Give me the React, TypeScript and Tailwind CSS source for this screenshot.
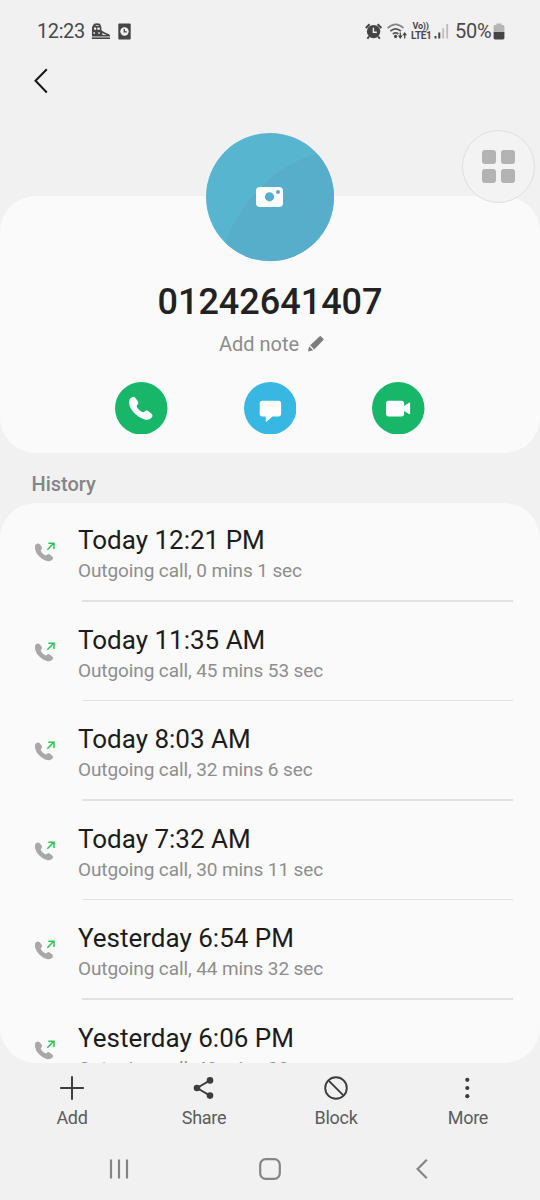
import React from "react";

const calls = [
  { when: "Today 12:21 PM", detail: "Outgoing call, 0 mins 1 sec" },
  { when: "Today 11:35 AM", detail: "Outgoing call, 45 mins 53 sec" },
  { when: "Today 8:03 AM", detail: "Outgoing call, 32 mins 6 sec" },
  { when: "Today 7:32 AM", detail: "Outgoing call, 30 mins 11 sec" },
  { when: "Yesterday 6:54 PM", detail: "Outgoing call, 44 mins 32 sec" },
  { when: "Yesterday 6:06 PM", detail: "Outgoing call, 48 mins 33 sec" },
];

const HANDSET =
  "M97 80Q103 76 108 82L116 92Q119 97 114 102Q110 106 113 110Q118 118 127 123Q132 126 136 122Q141 117 146 121L157 130Q162 135 157 140Q149 149 136 146Q112 139 96 116Q87 101 90 87Q92 82 97 80Z";

function StatusBar() {
  return (
    <div className="flex h-[62px] items-center pl-[37px] pr-[35px] text-[#4a4a4a]">
      <span className="w-[48px] whitespace-nowrap text-[20px] leading-[24px] tracking-[-0.4px]">12:23</span>
      <svg className="ml-[6px] h-[17px] w-[20px]" viewBox="0 0 20 17" fill="#454545">
        <path d="M3 .8Q6 -.2 9 .8L10.4 4.2V7Q12 9.2 17.6 11Q19.4 12.2 19 13.6H1V4.2Z" />
        <path d="M3 4.6H5.2V6.8H3ZM6.4 4.6H8.8V6.8H6.4ZM2.4 9.2H4V10.8H2.4ZM7.2 9.2H8.8V10.8H7.2ZM4.6 2H7.6V2.8H4.6ZM11 10L15.6 12H11.6Z" fill="#f1f1f1" />
        <path d="M.8 14.4H19V16H.8Z" />
      </svg>
      <svg className="ml-[7px] h-[17px] w-[13px]" viewBox="0 0 13 17" fill="#454545">
        <rect x=".3" y=".5" width="12.4" height="16" rx="1" />
        <circle cx="6.5" cy="8.5" r="4.2" fill="#f1f1f1" />
        <path d="M6.3 6V8.9H8.8" fill="none" stroke="#454545" strokeWidth="1.3" />
      </svg>
      <div className="ml-auto flex items-center">
        <svg className="h-[17px] w-[18px]" viewBox="0 0 18 17">
          <circle cx="8.6" cy="8.6" r="6.7" fill="#454545" />
          <path d="M.8 5L4.6 1.3M16.4 5L12.6 1.3M4 13.5L2.4 15.8M13.2 13.5L14.8 15.8" stroke="#454545" strokeWidth="2" />
          <path d="M8.4 4.8V9.2H11.8" fill="none" stroke="#f1f1f1" strokeWidth="1.4" />
        </svg>
        <svg className="ml-[4px] h-[19px] w-[22px]" viewBox="0 0 22 19" fill="none" stroke="#555" strokeWidth="1.8">
          <path d="M.6 6.2Q8.6 -1.4 16.6 6.2" stroke="#888" />
          <path d="M3.3 9.2Q8.6 4.5 13.9 9.2M5.9 12Q8.6 9.8 11.3 12" />
          <circle cx="8.6" cy="14.4" r="1.6" fill="#454545" stroke="none" />
          <path d="M13.3 10.6V15.2M17.7 16.4V11.8" strokeWidth="1.4" />
          <path d="M11 13.6H15.6L13.3 17ZM15.4 13.2H20L17.7 10Z" fill="#454545" stroke="none" />
        </svg>
        <div className="ml-[2px] flex w-[21px] flex-col">
          <span className="pl-[1.5px] text-[9px] font-bold leading-[9px] tracking-[-0.2px]">Vo))</span>
          <span className="whitespace-nowrap text-[10px] font-bold leading-[9px] tracking-[-0.4px]">LTE1</span>
        </div>
        <svg className="ml-[2px] h-[16px] w-[15px]" viewBox="0 0 15 16">
          <path d="M1.5 13V15.4M5.3 9.5V15.4" stroke="#454545" strokeWidth="2" />
          <path d="M9.2 5.3V15.4M13.2 1V15.4" stroke="#bbb" strokeWidth="1.8" />
        </svg>
        <span className="ml-[6px] w-[36px] whitespace-nowrap text-[20px] leading-[24px] tracking-[-0.3px]">50%</span>
        <svg className="ml-[2px] h-[17px] w-[12px]" viewBox="0 0 12 17">
          <path d="M3.4 2V.6H8.6V2H10Q11.4 2 11.4 3.4V9H.6V3.4Q.6 2 2 2Z" fill="#b5b5b5" />
          <path d="M.6 9H11.4V15Q11.4 16.4 10 16.4H2Q.6 16.4 .6 15Z" fill="#454545" />
        </svg>
      </div>
    </div>
  );
}

function Profile() {
  return (
    <section className="flex h-[257px] flex-col items-center rounded-[36px] bg-[#fafafa]">
      <svg className="-mt-[63px] h-[128px] w-[128px] shrink-0" viewBox="0 0 128 128">
        <defs>
          <clipPath id="avatar"><circle cx="64" cy="64" r="64" /></clipPath>
        </defs>
        <g clipPath="url(#avatar)">
          <rect width="128" height="128" fill="#57b5d0" />
          <path d="M18 114Q29 79 57 53Q79 29 112 21L128 20V128H18Z" fill="#56aecb" />
        </g>
        <path fillRule="evenodd" fill="#fff" d="M54 54H73Q77 54 77 58V70Q77 74 73 74H54Q50 74 50 70V58Q50 54 54 54ZM63.5 59.2A4.6 4.6 0 1 0 63.5 68.4A4.6 4.6 0 1 0 63.5 59.2ZM72 57A2 2 0 1 0 72 61A2 2 0 1 0 72 57Z" />
      </svg>
      <h1 className="mt-[20px] text-[36px] font-medium leading-[42px] text-[#222]">01242641407</h1>
      <div className="ml-[4px] mt-[9px] flex items-center text-[#8c8c8c]">
        <span className="whitespace-nowrap text-[20px] leading-[24px]">Add note</span>
        <svg className="ml-[8px] h-[18px] w-[18px]" viewBox="0 0 18 18" fill="#7d7d7d">
          <path d="M1 16.5L2.2 11.2L6.2 15.2ZM3.2 10.2L12.5 1.4Q13.3 .8 14.1 1.5L16.3 3.7Q17 4.5 16.2 5.3L7.2 14.4Z" />
        </svg>
      </div>
      <div className="mt-[25.5px] flex gap-[76px]">
        <button aria-label="Call">
          <svg className="h-[52.5px] w-[52.5px]" viewBox="47 34 157 157">
            <circle cx="125.5" cy="112.5" r="78.5" fill="#18b668" />
            <path d={HANDSET} fill="#fff" />
          </svg>
        </button>
        <button aria-label="Message">
          <svg className="h-[52.5px] w-[52.5px]" viewBox="432 34 157 157">
            <circle cx="510.5" cy="112.5" r="78.5" fill="#38b7e3" />
            <path d="M487 90H535Q543 90 543 98V129Q543 137 535 137H517L500 152Q497 154 497 150V137H487Q479 137 479 129V98Q479 90 487 90Z" fill="#fff" />
          </svg>
        </button>
        <button aria-label="Video call">
          <svg className="h-[52.5px] w-[52.5px]" viewBox="816 34 157 157">
            <circle cx="894.5" cy="112.5" r="78.5" fill="#18b668" />
            <path d="M866 90H904Q912 90 912 98V106L927 96Q930 94 930 98V128Q930 132 927 130L912 121V129Q912 137 904 137H866Q858 137 858 129V98Q858 90 866 90Z" fill="#fff" />
          </svg>
        </button>
      </div>
    </section>
  );
}

function CallRow({ when, detail }: { when: string; detail: string }) {
  return (
    <li className="flex h-[99.5px] shrink-0 pl-[34px] pr-[27px] first:-mt-px">
      <svg className="mt-[39px] h-[22px] w-[22px] shrink-0" viewBox="0 0 66 66">
        <path transform="translate(-67 -54) scale(.78)" d={HANDSET} fill="#a8a8a8" />
        <path d="M40 26L59 7M43 6.5H60V24" fill="none" stroke="#2fc153" strokeWidth="4.5" />
      </svg>
      <div className="ml-[22px] flex flex-1 flex-col">
        <div className="mt-[23px] whitespace-nowrap text-[26px] leading-[30px] text-[#1c1c1c]">{when}</div>
        <div className="mt-[4px] whitespace-nowrap text-[19px] leading-[23px] tracking-[-0.1px] text-[#8e8e8e]">{detail}</div>
        <div className="ml-1 mt-auto h-[1.5px] bg-[#e2e2e2]" />
      </div>
    </li>
  );
}

const actions = [
  { label: "Add", icon: <path d="M12 .2V23.8M.2 12H23.8" stroke="#3d3d3d" strokeWidth="2" /> },
  {
    label: "Share",
    icon: (
      <g fill="#3d3d3d">
        <path d="M18 4.4L5 12L18 19.6" fill="none" stroke="#3d3d3d" strokeWidth="1.8" />
        <circle cx="18" cy="4.4" r="3.3" /><circle cx="5" cy="12" r="3.3" /><circle cx="18" cy="19.6" r="3.3" />
      </g>
    ),
  },
  {
    label: "Block",
    icon: (
      <g fill="none" stroke="#3d3d3d" strokeWidth="1.9">
        <circle cx="12" cy="12" r="10.8" /><path d="M4.4 4.4L19.6 19.6" />
      </g>
    ),
  },
  {
    label: "More",
    icon: (
      <g fill="#3d3d3d">
        <circle cx="11.3" cy="3.8" r="2.1" /><circle cx="11.3" cy="12" r="2.1" /><circle cx="11.3" cy="20.2" r="2.1" />
      </g>
    ),
  },
];

export default function App() {
  return (
    <div className="relative flex h-[1200px] w-[540px] flex-col overflow-hidden bg-[#f1f1f1] font-['Roboto',sans-serif]">
      <StatusBar />
      <header className="h-[134px] pl-[34px] pt-[6px]">
        <svg className="h-[26px] w-[15px]" viewBox="0 0 15 26" fill="none" stroke="#161616" strokeWidth="2">
          <path d="M12.8 1.2L1.5 12.8L12.8 24.5" />
        </svg>
      </header>
      <Profile />
      <h2 className="h-[50px] pl-[31.5px] pt-[19px] text-[20px] font-medium leading-[24px] text-[#858585]">History</h2>
      <ul className="flex h-[560px] flex-col overflow-hidden rounded-[36px] bg-[#fafafa]">
        {calls.map((c) => <CallRow key={c.when} {...c} />)}
      </ul>
      <nav className="grid h-[76px] grid-cols-4 px-[6px] pt-[13px]">
        {actions.map((a) => (
          <button key={a.label} className="flex flex-col items-center text-[18px] leading-[22px] tracking-[-0.3px] text-[#5c5c5c]">
            <svg className="h-[24px] w-[24px]" viewBox="0 0 24 24">{a.icon}</svg>
            <span className="mt-[7px]">{a.label}</span>
          </button>
        ))}
      </nav>
      <div className="flex h-[60px] items-center justify-between pl-[109px] pr-[112px]">
        <svg className="h-[22px] w-[20px]" viewBox="0 0 20 22">
          <path d="M2 1.5V20.5M10 1.5V20.5M18 1.5V20.5" stroke="#858585" strokeWidth="2.2" />
        </svg>
        <svg className="-ml-[5px] h-[22px] w-[22px]" viewBox="0 0 22 22">
          <rect x="1.2" y="1.2" width="19.6" height="19.6" rx="5.5" fill="none" stroke="#858585" strokeWidth="2.2" />
        </svg>
        <svg className="h-[22px] w-[12px]" viewBox="0 0 12 22">
          <path d="M10.8 1.8L1.6 11L10.8 20.2" fill="none" stroke="#858585" strokeWidth="2.2" />
        </svg>
      </div>
      <div className="absolute left-[461.5px] top-[130px] flex h-[73px] w-[73px] items-center justify-center rounded-full border-[1.5px] border-[#dedede] bg-[#f3f3f3]">
        <div className="grid grid-cols-2 gap-[5px]">
          <i className="h-[14px] w-[14px] rounded-[3px] bg-[#b3b3b3]" />
          <i className="h-[14px] w-[14px] rounded-[3px] bg-[#b3b3b3]" />
          <i className="h-[14px] w-[14px] rounded-[3px] bg-[#b3b3b3]" />
          <i className="h-[14px] w-[14px] rounded-[3px] bg-[#b3b3b3]" />
        </div>
      </div>
    </div>
  );
}
